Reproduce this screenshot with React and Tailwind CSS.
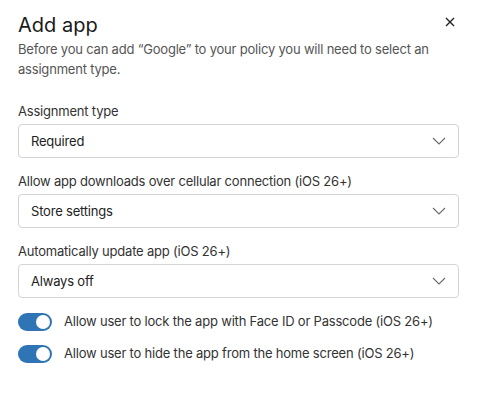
import React, { useState } from 'react';

const Chevron = () => (
  <svg width="14" height="8" viewBox="0 0 14 8" fill="none" className="shrink-0">
    <path d="M1 1l6 6 6-6" stroke="#6b6b6b" strokeWidth="1.1" />
  </svg>
);

const SelectField = ({ label, value }) => (
  <div className="flex flex-col">
    <label className="text-[13px] leading-[20px] tracking-[-0.2px] text-[#333] mb-[3px]">{label}</label>
    <div className="flex items-center justify-between h-[34px] px-3 border border-[#d4d4d4] rounded-[4px] bg-white">
      <span className="text-[13px] tracking-[-0.2px] text-[#222] mt-[1px]">{value}</span>
      <Chevron />
    </div>
  </div>
);

const Toggle = ({ on, onClick, label }) => (
  <div className="flex items-center gap-3 h-[20px]">
    <button
      onClick={onClick}
      className={`relative w-[34px] h-[18px] rounded-full shrink-0 ${on ? 'bg-[#2f74b5]' : 'bg-gray-300'}`}
    >
      <span
        className={`absolute top-[2px] w-[14px] h-[14px] rounded-full bg-white ${on ? 'left-[18px]' : 'left-[2px]'}`}
      />
    </button>
    <span className="text-[13px] tracking-[-0.2px] text-[#333]">{label}</span>
  </div>
);

const App = () => {
  const [lock, setLock] = useState(true);
  const [hide, setHide] = useState(true);

  return (
    <div className="w-[477px] h-[393px] bg-white px-[18px] pt-[11px] font-['Inter',sans-serif] relative">
      <div className="flex items-start justify-between">
        <h2 className="text-[20px] leading-[28px] text-[#1a1a1a]">Add app</h2>
        <button className="mt-[6px] mr-[4px] text-[#222]">
          <svg width="10" height="10" viewBox="0 0 10 10">
            <path d="M1 1l8 8M9 1l-8 8" stroke="#222" strokeWidth="1.4" />
          </svg>
        </button>
      </div>
      <p className="text-[13px] leading-[20px] tracking-[-0.2px] text-[#555] pr-[18px]">
        Before you can add “Google” to your policy you will need to select an assignment type.
      </p>

      <div className="mt-[22px] flex flex-col gap-[13px]">
        <SelectField label="Assignment type" value="Required" />
        <SelectField label="Allow app downloads over cellular connection (iOS 26+)" value="Store settings" />
        <SelectField label="Automatically update app (iOS 26+)" value="Always off" />
      </div>

      <div className="mt-[14px] flex flex-col gap-[12px]">
        <Toggle on={lock} onClick={() => setLock(!lock)} label="Allow user to lock the app with Face ID or Passcode (iOS 26+)" />
        <Toggle on={hide} onClick={() => setHide(!hide)} label="Allow user to hide the app from the home screen (iOS 26+)" />
      </div>
    </div>
  );
};

export default App;
